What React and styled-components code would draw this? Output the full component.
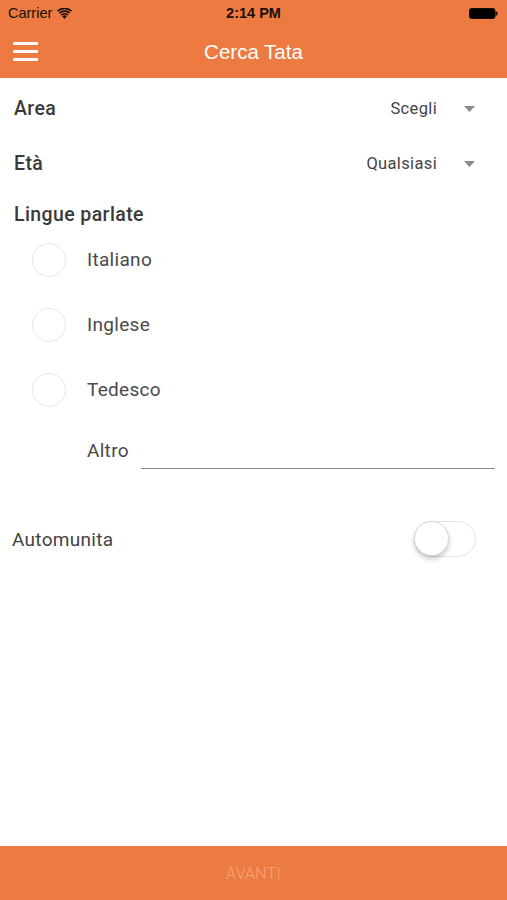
import React from "react";
import styled, { createGlobalStyle } from "styled-components";

const Global = createGlobalStyle`
  html, body { margin: 0; padding: 0; background: #fff; }
  body { font-family: Roboto, "Liberation Sans", sans-serif; }
  * { box-sizing: border-box; }
`;

const ORANGE = "#ED7B41";

const Screen = styled.div`
  width: 507px;
  height: 900px;
  display: flex;
  flex-direction: column;
  background: #fff;
`;

const Header = styled.div`
  background: ${ORANGE};
  display: flex;
  flex-direction: column;
`;

const StatusBar = styled.div`
  height: 26px;
  display: grid;
  grid-template-columns: 1fr auto 1fr;
  align-items: center;
  padding: 0 8px;
  font-family: "Liberation Sans", Arial, sans-serif;
  font-size: 14.5px;
  color: #1a0e05;
`;

const StatusLeft = styled.div`
  display: flex;
  align-items: center;
  gap: 5px;
`;

const StatusTime = styled.div`
  font-weight: 700;
`;

const StatusRight = styled.div`
  display: flex;
  justify-content: flex-end;
  padding-right: 1px;
`;

const NavBar = styled.div`
  height: 52px;
  display: grid;
  grid-template-columns: 60px 1fr 60px;
  align-items: center;
`;

const MenuButton = styled.div`
  display: flex;
  flex-direction: column;
  gap: 5px;
  padding-left: 13px;
  padding-bottom: 1px;
`;

const MenuLine = styled.span`
  display: block;
  width: 25px;
  height: 3px;
  background: #fff;
  border-radius: 1px;
`;

const Title = styled.div`
  text-align: center;
  color: #fff;
  font-size: 20.5px;
  font-family: "Liberation Sans", Arial, sans-serif;
`;

const Content = styled.div`
  flex: 1;
  display: flex;
  flex-direction: column;
  padding-top: 3px;
`;

const SelectRow = styled.div`
  height: 55px;
  display: flex;
  align-items: center;
  justify-content: space-between;
  padding: 0 32px 0 14px;
`;

const Label = styled.div`
  font-size: 19.5px;
  letter-spacing: 0.4px;
  font-weight: 500;
  color: #3a3a3a;
`;

const SelectValue = styled.div`
  display: flex;
  align-items: center;
  gap: 27px;
  font-size: 16.5px;
  letter-spacing: 0.35px;
  color: #444;
`;

const SectionTitle = styled(Label)`
  margin-top: 12px;
  line-height: 24px;
  padding-left: 14px;
`;

const RadioRow = styled.div`
  height: 65px;
  display: flex;
  align-items: center;
  padding-left: 32px;
  gap: 21px;
`;

const Radio = styled.span`
  width: 34px;
  height: 34px;
  border-radius: 50%;
  border: 1.5px solid #e6e6e6;
  background: #fff;
`;

const OptionText = styled.div`
  font-size: 19px;
  letter-spacing: 0.3px;
  color: #4a4a4a;
`;

const OtherRow = styled.div`
  height: 56px;
  display: flex;
  align-items: center;
  padding: 0 12px 0 87px;
  gap: 12px;
`;

const OtherInput = styled.div`
  flex: 1;
  height: 38px;
  border-bottom: 1.5px solid #8a8a8a;
`;

const ToggleRow = styled.div`
  margin-top: 36px;
  height: 50px;
  display: flex;
  align-items: center;
  justify-content: space-between;
  padding: 0 31px 0 12px;
`;

const PlainLabel = styled.div`
  font-size: 19px;
  letter-spacing: 0.3px;
  color: #444;
`;

const Switch = styled.div`
  position: relative;
  width: 62px;
  height: 36px;
  border-radius: 18px;
  border: 1.5px solid #e4e4e4;
  background: #fff;
`;

const Knob = styled.span`
  position: absolute;
  left: -1px;
  top: -1px;
  width: 35px;
  height: 35px;
  border-radius: 50%;
  background: #fff;
  border: 1px solid #d8d8d8;
  box-shadow: 0 3px 5px rgba(0, 0, 0, 0.22);
`;

const Footer = styled.div`
  height: 54px;
  background: ${ORANGE};
  display: flex;
  align-items: center;
  justify-content: center;
  color: #F6A67A;
  font-size: 16px;
  font-weight: 300;
  letter-spacing: 0.2px;
`;

const Caret = () => (
  <svg width="11" height="6" viewBox="0 0 11 6">
    <path d="M0 0 H11 L5.5 6 Z" fill="#8c8c8c" />
  </svg>
);

const Wifi = () => (
  <svg width="15" height="11" viewBox="0 0 15 11">
    <path d="M7.5 11 L5.2 8.3 A3.4 3.4 0 0 1 9.8 8.3 Z" fill="#1a0e05" />
    <path d="M3.6 6.6 A5.6 5.6 0 0 1 11.4 6.6 L10.3 7.8 A4 4 0 0 0 4.7 7.8 Z" fill="#1a0e05" />
    <path d="M1.8 4.6 A8.2 8.2 0 0 1 13.2 4.6 L12.1 5.8 A6.6 6.6 0 0 0 2.9 5.8 Z" fill="#1a0e05" />
    <path d="M0 2.6 A10.8 10.8 0 0 1 15 2.6 L13.9 3.8 A9.2 9.2 0 0 0 1.1 3.8 Z" fill="#1a0e05" />
  </svg>
);

const Battery = () => (
  <svg width="29" height="11" viewBox="0 0 29 11">
    <rect x="0.5" y="0.5" width="25.5" height="10" rx="2" fill="#000" stroke="#1a0e05" />
    <rect x="26.5" y="3.5" width="2" height="4" rx="0.8" fill="#1a0e05" />
  </svg>
);

const languages = ["Italiano", "Inglese", "Tedesco"];

export default function App() {
  return (
    <>
      <Global />
      <Screen>
        <Header>
          <StatusBar>
            <StatusLeft>
              <span>Carrier</span>
              <Wifi />
            </StatusLeft>
            <StatusTime>2:14 PM</StatusTime>
            <StatusRight>
              <Battery />
            </StatusRight>
          </StatusBar>
          <NavBar>
            <MenuButton>
              <MenuLine />
              <MenuLine />
              <MenuLine />
            </MenuButton>
            <Title>Cerca Tata</Title>
            <span />
          </NavBar>
        </Header>
        <Content>
          <SelectRow>
            <Label>Area</Label>
            <SelectValue>
              <span>Scegli</span>
              <Caret />
            </SelectValue>
          </SelectRow>
          <SelectRow>
            <Label>Età</Label>
            <SelectValue>
              <span>Qualsiasi</span>
              <Caret />
            </SelectValue>
          </SelectRow>
          <SectionTitle>Lingue parlate</SectionTitle>
          {languages.map((l) => (
            <RadioRow key={l}>
              <Radio />
              <OptionText>{l}</OptionText>
            </RadioRow>
          ))}
          <OtherRow>
            <OptionText>Altro</OptionText>
            <OtherInput />
          </OtherRow>
          <ToggleRow>
            <PlainLabel>Automunita</PlainLabel>
            <Switch>
              <Knob />
            </Switch>
          </ToggleRow>
        </Content>
        <Footer>AVANTI</Footer>
      </Screen>
    </>
  );
}
